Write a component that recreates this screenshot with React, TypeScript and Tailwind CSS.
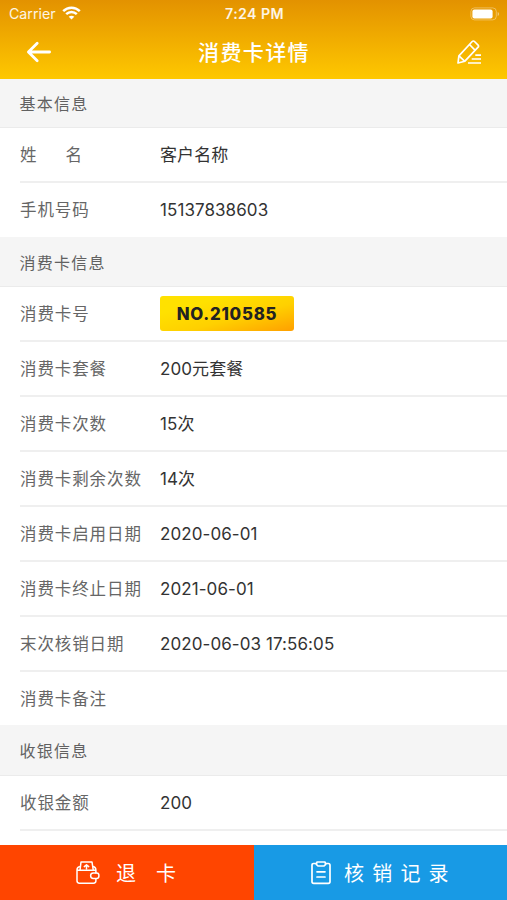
interface Field {
  label: string;
  value?: string;
  badge?: boolean;
}

const customerFields: Field[] = [
  { label: '姓名', value: '客户名称' },
  { label: '手机号码', value: '15137838603' },
];

const cardFields: Field[] = [
  { label: '消费卡号', value: 'NO.210585', badge: true },
  { label: '消费卡套餐', value: '200元套餐' },
  { label: '消费卡次数', value: '15次' },
  { label: '消费卡剩余次数', value: '14次' },
  { label: '消费卡启用日期', value: '2020-06-01' },
  { label: '消费卡终止日期', value: '2021-06-01' },
  { label: '末次核销日期', value: '2020-06-03 17:56:05' },
  { label: '消费卡备注' },
];

const cashierFields: Field[] = [{ label: '收银金额', value: '200' }];

function StatusBar() {
  return (
    <div className="grid h-[27px] grid-cols-[1fr_auto_1fr] items-center pl-[9px] pr-[7px] text-white/90">
      <div className="flex items-center gap-1.5">
        <span className="pt-px text-[14.2px] leading-none">Carrier</span>
        <svg width="19" height="14" viewBox="0 0 19 14" fill="none" stroke="white" strokeWidth="2.5">
          <path d="M1.2 5.1C5.9.5 13.1.5 17.8 5.1" />
          <path d="M4.2 8.2c3-2.9 7.6-2.9 10.6 0" />
          <path d="M6.7 10.8c1.6-1.5 4-1.5 5.6 0L9.5 13.6z" fill="white" stroke="none" />
        </svg>
      </div>
      <span className="pt-px text-[14.2px] font-semibold leading-none tracking-[0.4px]">7:24 PM</span>
      <svg className="justify-self-end" width="30" height="14" viewBox="0 0 30 14" fill="none">
        <rect x="0.9" y="0.9" width="25.4" height="12" rx="3.6" stroke="white" strokeOpacity="0.35" />
        <rect x="2.4" y="2.4" width="20.2" height="9" rx="2" fill="white" />
        <path d="M27.7 5v4c1.9-.7 1.9-3.3 0-4z" fill="white" fillOpacity="0.45" />
      </svg>
    </div>
  );
}

function Header() {
  return (
    <header className="h-[79px] shrink-0 bg-linear-to-b from-[#e39200] to-[#fec800]">
      <StatusBar />
      <div className="grid h-[50px] grid-cols-[1fr_auto_1fr] items-center pl-[26px] pr-[25px] text-white">
        <button aria-label="返回">
          <svg width="26" height="22" viewBox="0 0 26 22" fill="none" stroke="currentColor" strokeWidth="2.8" strokeLinecap="round" strokeLinejoin="round">
            <path d="M11.2 2.2 2.4 11l8.8 8.8M2.8 11h20.8" />
          </svg>
        </button>
        <h1 className="text-[21px] font-medium leading-none tracking-[1.4px]">消费卡详情</h1>
        <button aria-label="编辑" className="justify-self-end">
          <svg width="26" height="26" viewBox="0 0 26 26" fill="none" stroke="currentColor" strokeWidth="1.7" strokeLinejoin="round">
            <path d="M2 24l.9-7.2L16.2 2.5c.7-.7 1.6-.7 2.3 0l3.6 3.6c.6.6.6 1.5 0 2.1L8.9 22.2z" />
            <path d="M13.5 5.5l5.7 5.8M3 16.8l5.8 5.5" />
            <path d="M19.3 16.2H25M15.7 20H25M12 24h13" />
          </svg>
        </button>
      </div>
    </header>
  );
}

function SectionTitle({ children }: { children: string }) {
  return (
    <h2 className="flex h-full items-center border-b border-[#ebebeb] bg-[#f5f5f5] pl-[19.5px] pt-0.5 text-[16px] leading-none tracking-[1.25px] text-[#616161]">
      {children}
    </h2>
  );
}

function FieldList({ fields }: { fields: Field[] }) {
  return (
    <dl className="pl-5">
      {fields.map((field) => (
        <div
          key={field.label}
          className="flex h-[55px] items-center border-b-2 border-[#efefef] leading-none not-first:last:h-[54px] not-first:last:border-transparent"
        >
          <dt className="w-[140px] shrink-0 whitespace-nowrap pt-0.5 text-[16.5px] tracking-[0.9px] text-[#666]">
            {field.label === '姓名' ? (
              <span className="flex w-[62px] justify-between tracking-normal">
                <span>姓</span>
                <span>名</span>
              </span>
            ) : (
              field.label
            )}
          </dt>
          {field.badge ? (
            <dd className="flex h-[35px] w-[134px] items-center justify-center rounded-[3px] bg-linear-to-br from-[#ffe100] from-25% via-[#ffd000] via-60% to-[#ff9f00] pt-0.5 text-[16.8px] font-extrabold tracking-[0.75px] text-[#222]">
              {field.value}
            </dd>
          ) : (
            <dd className="pt-0.5 text-[17px] tracking-[0.08px] text-[#333]">{field.value}</dd>
          )}
        </div>
      ))}
    </dl>
  );
}

function RefundIcon() {
  return (
    <svg width="25" height="25" viewBox="0 0 25 25" fill="none" stroke="currentColor" strokeWidth="1.5" strokeLinejoin="round" strokeLinecap="round">
      <path d="M5 10.3 6 2h11l1.3 8.3" />
      <path d="M5.3 6.5C3 6.8 2 7.7 2 9.8v11c0 1.6.8 2.4 2.4 2.4h14.1c1.6 0 2.4-.8 2.4-2.4v-2M2 10.3h18.9v2.8M18.1 6.5c1.9.3 2.8 1.4 2.8 3.8" />
      <path d="M18.4 13.1h3.3c3 0 3 5.4 0 5.4h-3.3c-3.7 0-3.7-5.4 0-5.4z" />
      <path d="M11.5 9V5.2M9.3 6.6l2.2-1.8 2.2 1.8" />
    </svg>
  );
}

function RecordIcon() {
  return (
    <svg width="22" height="25" viewBox="0 0 22 25" fill="none" stroke="currentColor" strokeWidth="1.7" strokeLinejoin="round" strokeLinecap="round">
      <path d="M6.3 3.5H3.7C2.5 3.5 2 4 2 5.2v16.6c0 1.1.5 1.6 1.7 1.6h14.6c1.2 0 1.7-.5 1.7-1.6V5.2c0-1.2-.5-1.7-1.7-1.7h-2.6" />
      <path d="M7 2h8l.7 2.3L14 6H8L6.3 4.3z" />
      <path d="M7 11.8h8M7 17h8" />
    </svg>
  );
}

export default function App() {
  return (
    <div className="flex h-[900px] w-[507px] flex-col overflow-hidden bg-white font-['Inter','Noto_Sans_CJK_SC',sans-serif]">
      <Header />
      <main className="min-h-0 flex-1 overflow-hidden">
        <div className="h-[49px]">
          <SectionTitle>基本信息</SectionTitle>
        </div>
        <FieldList fields={customerFields} />
        <div className="h-[50px]">
          <SectionTitle>消费卡信息</SectionTitle>
        </div>
        <FieldList fields={cardFields} />
        <div className="-mt-px h-[51px]">
          <SectionTitle>收银信息</SectionTitle>
        </div>
        <FieldList fields={cashierFields} />
      </main>
      <footer className="grid h-[55px] shrink-0 grid-cols-[254px_1fr] text-[20px] text-white">
        <button className="flex items-center bg-[#ff4500] pl-[75px]">
          <RefundIcon />
          <span className="ml-4 whitespace-pre pt-0.5 tracking-[20px]">退卡</span>
        </button>
        <button className="flex items-center bg-[#189ae5] pl-[56px]">
          <RecordIcon />
          <span className="ml-3 whitespace-nowrap pt-0.5 tracking-[8.2px]">核销记录</span>
        </button>
      </footer>
    </div>
  );
}
